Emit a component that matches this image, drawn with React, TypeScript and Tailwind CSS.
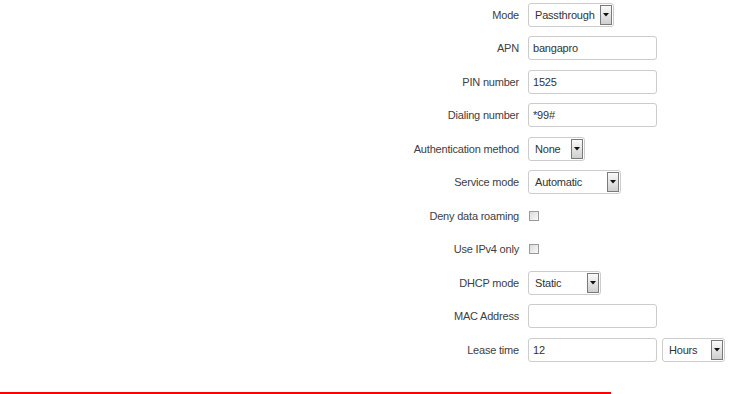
import React from 'react';

const font = { fontFamily: '"Liberation Sans", Arial, sans-serif' };

const Arrow: React.FC = () => (
    <span className="absolute right-[1px] top-[1px] bottom-[1px] w-[12px] border border-[#7a7a7a] bg-gradient-to-b from-[#fafafa] to-[#cfcfcf] flex items-center justify-center">
        <svg width="6" height="4" viewBox="0 0 6 4">
            <path d="M0 0 H6 L3 3.5 Z" fill="#111" />
        </svg>
    </span>
);

const Select: React.FC<{ value: string; w: string }> = ({ value, w }) => (
    <div className={`relative h-[24px] ${w} border border-[#cccccc] rounded-[3px] bg-white flex items-center pl-[6px] text-[11px] tracking-[-0.2px] text-[#333]`}>
        {value}
        <Arrow />
    </div>
);

const Input: React.FC<{ value?: string; w?: string }> = ({ value = '', w = 'w-[129px]' }) => (
    <div className={`h-[24px] ${w} border border-[#cccccc] rounded-[3px] bg-white flex items-center pl-[4px] text-[11px] tracking-[-0.2px] text-[#333]`}>
        {value}
    </div>
);

const Check: React.FC = () => (
    <div className="ml-[1px] w-[10px] h-[10px] border border-[#9a9a9a] bg-gradient-to-br from-[#dcdcdc] to-[#f8f8f8]" />
);

const Row: React.FC<{ label: string; children: React.ReactNode }> = ({ label, children }) => (
    <div className="h-[33.5px] flex items-center">
        <div className="w-[519px] text-right text-[11px] tracking-[-0.2px] text-[#404040]">{label}</div>
        <div className="ml-[9px] flex items-center gap-[5px]">{children}</div>
    </div>
);

export default function App() {
    return (
        <div className="w-[734px] h-[394px] bg-white relative overflow-hidden" style={font}>
            <div className="-mt-[2px]">
                <Row label="Mode"><Select value="Passthrough" w="w-[86px]" /></Row>
                <Row label="APN"><Input value="bangapro" /></Row>
                <Row label="PIN number"><Input value="1525" /></Row>
                <Row label="Dialing number"><Input value="*99#" /></Row>
                <Row label="Authentication method"><Select value="None" w="w-[57px]" /></Row>
                <Row label="Service mode"><Select value="Automatic" w="w-[93px]" /></Row>
                <Row label="Deny data roaming"><Check /></Row>
                <Row label="Use IPv4 only"><Check /></Row>
                <Row label="DHCP mode"><Select value="Static" w="w-[73px]" /></Row>
                <Row label="MAC Address"><Input /></Row>
                <Row label="Lease time">
                    <Input value="12" />
                    <Select value="Hours" w="w-[63px]" />
                </Row>
            </div>
            <div className="absolute left-0 bottom-0 w-[611px] h-[2px] bg-[#ff0000]" />
        </div>
    );
}
